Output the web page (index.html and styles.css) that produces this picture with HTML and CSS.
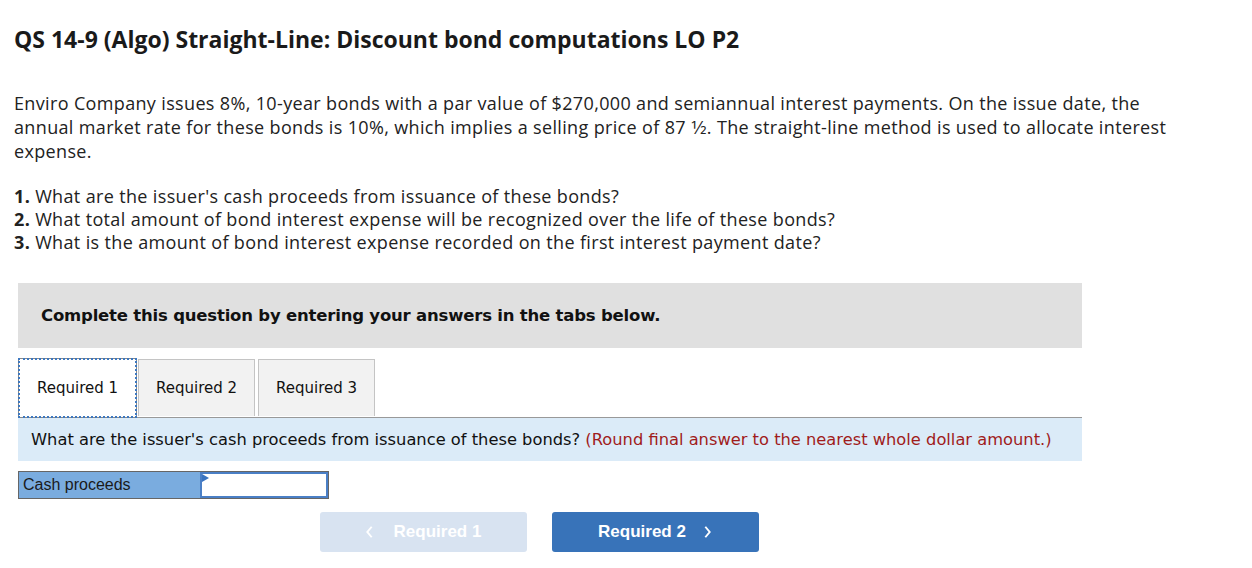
FILE: index.html
```html
<!DOCTYPE html>
<html>
<head>
<meta charset="utf-8">
<link rel="stylesheet" href="styles.css">
</head>
<body>
<div class="page">
  <h1 class="title">QS 14-9 (Algo) Straight-Line: Discount bond computations LO P2</h1>
  <p class="intro">Enviro Company issues 8%, 10-year bonds with a par value of $270,000 and semiannual interest payments. On the issue date, the annual market rate for these bonds is 10%, which implies a selling price of 87 1⁄2. The straight-line method is used to allocate interest expense.</p>
  <ol class="reqs">
    <li><b>1.</b> What are the issuer's cash proceeds from issuance of these bonds?</li>
    <li><b>2.</b> What total amount of bond interest expense will be recognized over the life of these bonds?</li>
    <li><b>3.</b> What is the amount of bond interest expense recorded on the first interest payment date?</li>
  </ol>
  <div class="work">
    <div class="banner">Complete this question by entering your answers in the tabs below.</div>
    <div class="tabs">
      <div class="tab active">Required 1</div>
      <div class="tab">Required 2</div>
      <div class="tab">Required 3</div>
    </div>
    <div class="prompt">What are the issuer's cash proceeds from issuance of these bonds? <span class="hint">(Round final answer to the nearest whole dollar amount.)</span></div>
    <div class="answer">
      <div class="label">Cash proceeds</div>
      <div class="input"><span class="flag"></span></div>
    </div>
    <div class="nav">
      <div class="btn prev"><svg class="chev" viewBox="0 0 10 16" width="9" height="14"><path d="M7.5 2 L2.5 8 L7.5 14" fill="none" stroke="#fff" stroke-width="2.2"/></svg>Required 1</div>
      <div class="btn next">Required 2<svg class="chev" viewBox="0 0 10 16" width="9" height="14"><path d="M2.5 2 L7.5 8 L2.5 14" fill="none" stroke="#fff" stroke-width="2.2"/></svg></div>
    </div>
  </div>
</div>
</body>
</html>
```
FILE: styles.css
```css
html, body { margin: 0; padding: 0; background: #fff; }
.page {
  padding: 0 14px;
  font-family: "Open Sans", Lato, sans-serif;
  color: #222;
}
.title {
  margin: 0;
  padding-top: 25px;
  font-size: 23px;
  font-weight: 700;
  line-height: 28px;
  color: #1a1a1a;
}
.intro {
  margin: 0;
  padding-top: 38px;
  font-size: 18px;
  letter-spacing: 0.35px;
  line-height: 24px;
  width: 1162px;
}
.reqs {
  list-style: none;
  margin: 0;
  padding: 22px 0 0 0;
  font-size: 18px;
  letter-spacing: 0.35px;
  line-height: 23px;
}
.reqs b { font-weight: 700; }
.work {
  margin-top: 29px;
  margin-left: 4px;
  width: 1064px;
}
.banner {
  background: #e0e0e0;
  height: 65px;
  display: flex;
  align-items: center;
  padding-left: 23px;
  font-family: Verdana, "DejaVu Sans", sans-serif;
  font-weight: 700;
  font-size: 16.5px;
  color: #111;
  letter-spacing: -0.2px;
}
.tabs {
  display: flex;
  margin-top: 10px;
  gap: 1px;
}
.tab {
  height: 57px;
  box-sizing: border-box;
  border: 1px solid #c4c4c4;
  border-bottom: none;
  background: #f2f2f2;
  display: flex;
  align-items: center;
  justify-content: center;
  font-family: Verdana, "DejaVu Sans", sans-serif;
  font-size: 15px;
  color: #111;
  width: 117px;
  margin-top: 1px;
}
.tab.active {
  width: 119px;
  background: #fff;
  height: 60px;
  margin-top: 0;
  margin-bottom: -1px;
  position: relative;
  z-index: 1;
  border: 1px solid #888;
  outline: 2px dotted #3d78c0;
  outline-offset: -2px;
}
.tab + .tab + .tab { margin-left: 2px; }
.prompt {
  border-top: 1px solid #999;
  background: #dbebf8;
  height: 44px;
  box-sizing: border-box;
  display: flex;
  align-items: center;
  padding-left: 13px;
  font-family: Verdana, "DejaVu Sans", sans-serif;
  font-size: 16.3px;
  color: #111;
  white-space: pre;
}
.hint { color: #a01c1c; }
.answer {
  display: flex;
  margin-top: 10px;
  width: 311px;
  height: 28px;
  box-sizing: border-box;
  border: 1px solid #666;
  background: #7aacdf;
}
.label {
  width: 181px;
  font-family: "Liberation Sans", Arial, sans-serif;
  font-size: 16px;
  color: #1a1a1a;
  display: flex;
  align-items: center;
  padding-left: 4px;
  box-sizing: border-box;
}
.input {
  flex: 1;
  background: #fff;
  border: 2px solid #4a7fc6;
  position: relative;
}
.flag {
  position: absolute;
  left: 0;
  top: 0;
  width: 0;
  height: 0;
  border-top: 4px solid transparent;
  border-bottom: 4px solid transparent;
  border-left: 7px solid #3a74c0;
}
.nav {
  display: flex;
  justify-content: center;
  gap: 25px;
  margin-top: 13px;
  padding-right: 22px;
}
.btn {
  width: 207px;
  height: 40px;
  border-radius: 3px;
  display: flex;
  align-items: center;
  justify-content: center;
  font-family: "Liberation Sans", Arial, sans-serif;
  font-weight: 700;
  font-size: 17px;
  color: #fff;
}
.btn.prev { background: #d8e3f1; }
.btn.next { background: #3873b9; }
.prev .chev { margin-right: 20px; }
.next .chev { margin-left: 17px; }
```
